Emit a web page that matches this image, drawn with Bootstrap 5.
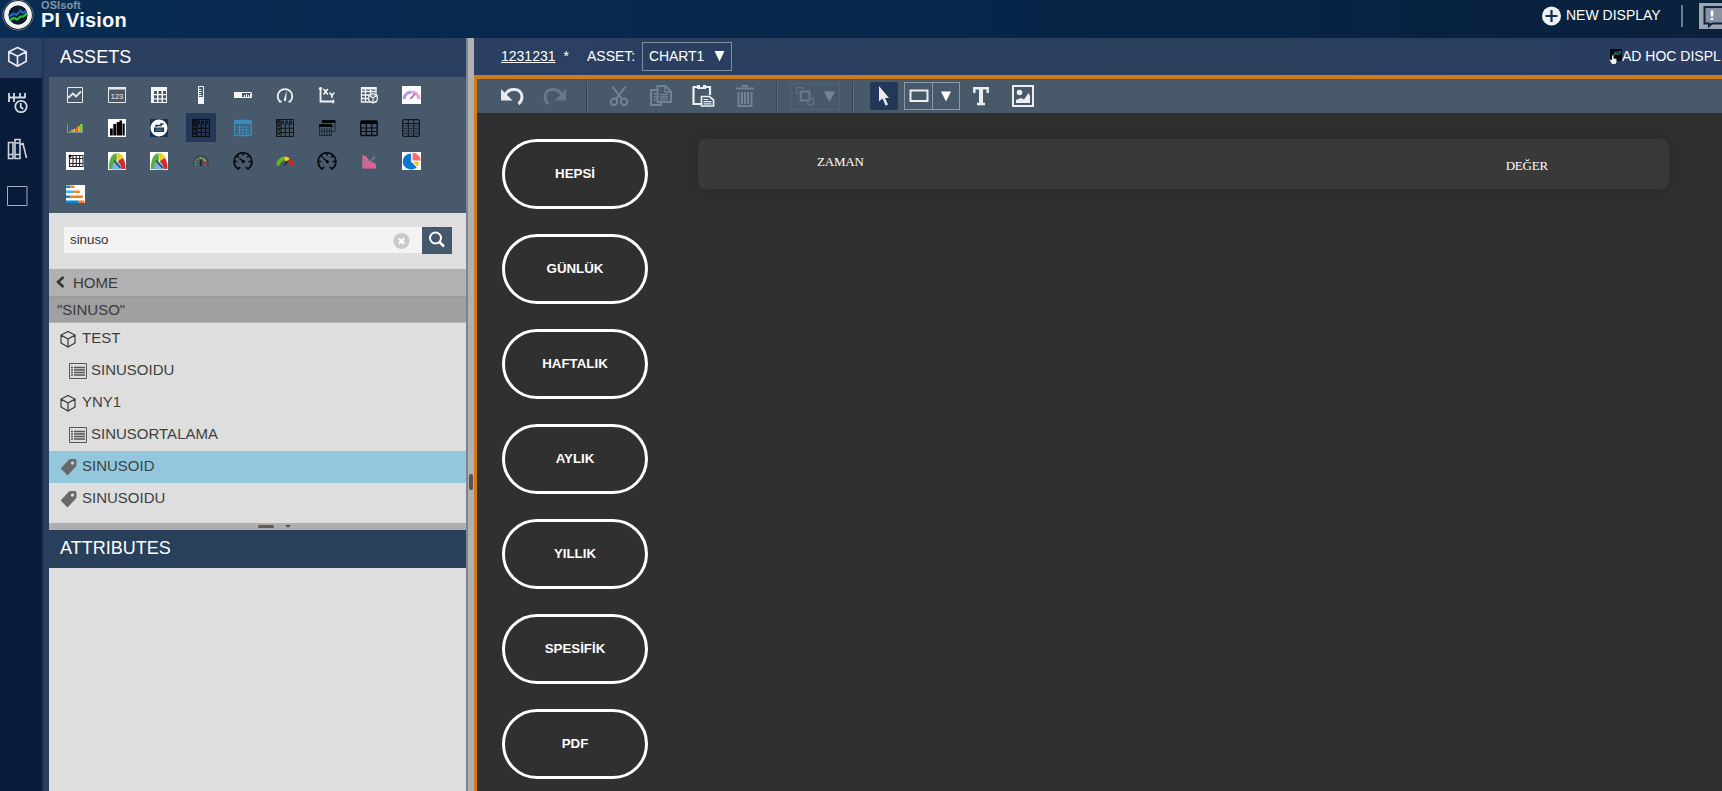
<!DOCTYPE html>
<html lang="tr">
<head>
<meta charset="utf-8">
<meta name="viewport" content="width=device-width, initial-scale=1">
<title>PI Vision</title>
<link rel="stylesheet" href="https://cdn.jsdelivr.net/npm/bootstrap@5.3.0/dist/css/bootstrap.min.css">
<style>
html,body{height:100%}
body{font-family:"Liberation Sans",Arial,sans-serif;font-size:14px;line-height:1;background:#303030;color:#fff;overflow:hidden}
svg{display:block;flex:none}
.topbar{height:38px;flex:none;background:linear-gradient(90deg,#082c52 0,#08284d 35%,#072345 75%,#0a213b 100%)}
.brand{margin-left:1px}
.brand-sub{font-size:11px;font-weight:bold;color:#8795a8;height:10px;line-height:10px;letter-spacing:.1px}
.brand-name{font-size:20px;font-weight:bold;line-height:20px;letter-spacing:.2px;color:#f5f7fa}
.top-actions{width:181px;flex:none;white-space:nowrap;overflow:hidden}
.newdisp{margin:4px 20px 0 4px}
.note{margin:-1px 0 0 16px}
.vline{width:2px;height:22px;margin-top:1px;background:#6b7a8e;flex:none}
.rail{width:42px;flex:none;background:#081b38}
.rail-item{height:47px;padding-left:6px}
.rail-item.active{height:40px;background:#2b4163;padding-bottom:2px}
.panel{width:424px;flex:none;background:#2a3f60;padding-left:5px;border-left:2px solid #20345a}
.panel-title{height:39px;flex:none;font-size:18px;padding:0 0 2px 11px;background:#2a3f5f;letter-spacing:.05px}
.panel-title.attr{height:38px;background:#29405b;letter-spacing:.02px}
.tools{height:136px;flex:none;background:#48596b;display:grid;grid-template-columns:repeat(9,42px);grid-template-rows:repeat(4,33.2px);padding:1px 0 0 5px;justify-items:center;align-items:center}
.tool{width:30px;height:29px;display:flex;align-items:center;justify-content:center}
.tool.active{background:#233858}
.search{height:56px;flex:none;background:#dedede;padding:0 14px 2px 15px}
.field{height:26px;background:#f3f3f3;color:#333;font-size:13.3px;padding:0 12px 0 6px}
.field span{padding-bottom:1px}
.search-btn{width:30px;height:27px;background:#45586b;border:0;border-radius:0;padding:0}
.crumb{height:27px;flex:none;font-size:15px;color:#3a3a3a;background:#b1b1b1;padding:0 0 1px 7px}
.crumb.term{background:#a0a0a0;padding-left:8px;border-top:1px solid #999;border-bottom:1px solid #b8b8b8}
.assets{height:200px;flex:none;background:#dedede}
.entry{height:32px;font-size:15px;color:#3f3f3f;padding-left:11px}
.entry.child{padding-left:20px}
.entry.picked{background:#93c8dc}
.entry span{padding-bottom:3px;margin-left:5px}
.entry .elem{margin-left:6px}
.entry.child span{margin-left:4px}
.hsplit{height:7px;flex:none;background:#aeaeae;padding-left:209px}
.grip{width:16px;height:3px;border-radius:2px;background:#665751}
.caret-sm{border:3px solid transparent;border-top-color:#665751;border-bottom:0;margin-left:11px;margin-top:-1px}
.vsplit{width:8px;flex:none;background:#b0b0b0;border-left:2px solid #7b8596}
.vgrip{width:4px;height:16px;border-radius:2px;background:#5c504b;margin:436px 0 0 1px}
.dispbar{height:37px;flex:none;background:linear-gradient(90deg,#2b3f62,#2a405c 60%,#293c62);padding:0 0 1px 27px}
.dispname{width:86px}
.assetlabel{width:55px}
.assetbox{height:29px;width:90px;border:1px solid #7d8b9e;padding:0 6px 0 6px}
.assetbox span{letter-spacing:-.1px}
.adhoc{width:113px;flex:none;overflow:hidden;white-space:nowrap}
.frame{border-top:4px solid #cf7a1c;border-left:3px solid #cf7a1c;min-height:0}
.toolbar{height:34px;flex:none;background:#48596a;display:grid;padding-left:13px;grid-template-columns:44px 42px 22px 42px 42px 42px 42px 22px 54px 22px 40px 56px 42px 42px;justify-items:center;align-items:center}
.sep{width:2px;height:31px;background:#36475b;border-right:1px solid #586b80}
.grpbox{width:50px;height:27px;border:1px solid #536476}
.cursor{width:28px;height:28px;background:#233858}
.shape{width:56px;height:28px;border:1px solid #8b97a5}
.shape>div{width:28px;height:100%}
.shape>div+div{border-left:1px solid #8b97a5;width:27px}
.canvas{background:#303030;padding:25.500px 0 0 25px;min-height:0;overflow:hidden}
.pills{gap:24.500px;margin-right:50px}
.pill{width:146px;height:70.500px;border:3px solid #fff;border-radius:36px;background:transparent;color:#fff;font-weight:bold;font-size:13.3px;padding:0;flex:none}
.headrow{width:971px;height:50px;border-radius:8px;background:#393939;box-shadow:0 0 16px 4px rgba(38,38,38,.38);font:13px/1 "Liberation Serif",serif;letter-spacing:-.2px;padding:0 121px 0 119px}
</style>
</head>
<body class="d-flex flex-column">
<header class="topbar d-flex">
  <svg width="40" height="38" viewBox="0 0 40 38"><circle cx="18" cy="15" r="15.300" fill="#0a1420" stroke="#597187"/><circle cx="18" cy="15" r="11.700" fill="#14253a" stroke="#f2f2f2" stroke-width="4.400"/><circle cx="18" cy="15" r="9.400" fill="#101c2c"/><path d="M9.500 16.500l4-3 3 1.500 4-4.500 2.500 2.500 3.500-2" fill="none" stroke="#1869c9" stroke-width="2.200"/><path d="M10 20l4-2 3 1.500 3.500-3 3 0 3.500-3" fill="none" stroke="#20c83c" stroke-width="2.200"/></svg>
  <div class="brand"><div class="brand-sub">OSIsoft</div><div class="brand-name">PI Vision</div></div>
  <div class="top-actions ms-auto d-flex align-items-start pt-1">
    <svg width="21" height="22" viewBox="0 0 21 22"><circle cx="10.500" cy="12" r="9.500" fill="#eef0f2"/><path d="M10.500 6v12M4.500 12h12" stroke="#15304f" stroke-width="2.200"/></svg>
    <span class="newdisp">NEW DISPLAY</span>
    <div class="vline"></div>
    <svg class="note" width="24" height="26" viewBox="0 0 24 26"><path fill="#9da5b3" d="M0 0h24v26H0z"/><path d="M5.500 4H24v16.500H13l-3 2.500v-2.500H5.500z" fill="#8793a5" stroke="#10233c" stroke-width="2"/><path d="M13 7.500v6M13 15v2" stroke="#fff" stroke-width="2.500"/></svg>
  </div>
</header>
<main class="d-flex flex-grow-1" style="min-height:0">
  <nav class="rail d-flex flex-column">
    <div class="rail-item active d-flex align-items-center"><svg width="22" height="22" viewBox="0 0 22 22" fill="none" stroke="#e6eaf0" stroke-width="1.700" stroke-linejoin="round"><path d="M11.500 1.500l8.700 4.300v9.500l-8.700 4.900-8.700-4.900V5.800zM2.800 5.800l8.700 4.400 8.700-4.400M11.500 10.200v10"/></svg></div>
    <div class="rail-item d-flex align-items-center"><svg width="24" height="24" viewBox="0 0 24 24" fill="none" stroke="#d4dae2" stroke-width="1.800"><path d="M3 3v9M8 3v9M14 3v5M19 3v5M3 7.500h16"/><circle cx="15" cy="16.500" r="5.700" fill="#081b38"/><path d="M14.700 13v4l2.500 2"/></svg></div>
    <div class="rail-item d-flex align-items-center"><svg width="24" height="24" viewBox="0 0 24 24" fill="none" stroke="#ccd3dc" stroke-width="1.600"><path d="M2.500 5.500h4.500v16H2.500zM9 2.500h5v19H9zM2.500 17.500h4.500M9 6h5M9 17.500h5M14.500 7.500l2.500-1L20.500 21"/></svg></div>
    <div class="rail-item d-flex align-items-center"><svg width="22" height="22" viewBox="0 0 22 22"><path d="M1.500 1.500h19.500v19H1.500z" fill="none" stroke="#a5aeba"/></svg></div>
  </nav>
  <aside class="panel d-flex flex-column">
    <div class="panel-title d-flex align-items-center">ASSETS</div>
    <div class="tools">
      <div class="tool"><svg width="18" height="18" viewBox="0 0 18 18" fill="none" stroke="#e6e9ec"><path d="M1.500 1.500h15v15h-15z"/><path d="M2 12l5-4.500 3 3 5-5" stroke-width="1.800"/></svg></div>
      <div class="tool"><svg width="18" height="18" viewBox="0 0 18 18"><path d="M.5 1.500h17v15H.5z" fill="none" stroke="#e6e9ec"/><path d="M0 1h18v2.500H0z" fill="#e6e9ec"/><text x="9" y="12.800" text-anchor="middle" font-size="7.500" fill="#f2f4f6" font-family="Liberation Sans">123</text></svg></div>
      <div class="tool"><svg width="18" height="18" viewBox="0 0 18 18"><path d="M1 1h16v16H1z" fill="#f2f4f6"/><path d="M4 5h3v3H4zM8.500 5h3v3h-3zM13 5h3v3h-3zM4 9.300h3v3H4zM8.500 9.300h3v3h-3zM13 9.300h3v3h-3zM4 13.500h3v2.500H4zM8.500 13.500h3v2.500h-3zM13 13.500h3v2.500h-3z" fill="#48596b"/></svg></div>
      <div class="tool"><svg width="18" height="18" viewBox="0 0 18 18"><path d="M6.500.5h5v17h-5z" fill="none" stroke="#f2f4f6"/><path d="M6 11h6v7H6zM7 3h2v1H7zM7 5h3v1H7zM7 7h2v1H7zM7 9h3v1H7z" fill="#f2f4f6"/></svg></div>
      <div class="tool"><svg width="18" height="18" viewBox="0 0 18 18"><path d="M.5 6.500h17v5H.5z" fill="none" stroke="#f2f4f6"/><path d="M0 6h8v6H0zM10 9h1v2h-1zM12 8h1v3h-1zM14 9h1v2h-1zM16 8h1v3h-1z" fill="#f2f4f6"/></svg></div>
      <div class="tool"><svg width="18" height="18" viewBox="0 0 18 18" fill="none" stroke="#f2f4f6" stroke-width="1.800"><path d="M5.500 15.500H3.800A7.300 7.300 0 1 1 14.200 15.500H12.500"/><path d="M10.600 4.500L7.800 14a1.200 1.200 0 0 0 2.300.4z" fill="#f2f4f6" stroke="none"/></svg></div>
      <div class="tool"><svg width="18" height="18" viewBox="0 0 18 18" fill="none" stroke="#f2f4f6" stroke-width="1.800"><path d="M2.500 1v14.500H16M.8 2.700h3.400M15.300 13.800v3.400"/><path d="M5.500 3l4.300 5.500M9.800 3L5.500 8.500M11.500 6.500l2.400 3L16.300 6.500M13.900 9v3" stroke-width="1.600"/></svg></div>
      <div class="tool"><svg width="18" height="18" viewBox="0 0 18 18"><path d="M1.500 2h14.500v14H1.500zM1 5.500h15M1 9h15M1 12.500h9M5.500 3v13M10.500 3v13" fill="none" stroke="#f2f4f6" stroke-width="1.300"/><path d="M1 1h15.500v2.500H1z" fill="#f2f4f6"/><path d="M13 7.500l4.200 2v5L13 17l-4.200-2.500v-5zM9 9.500l4 2.200 4-2.200M13 11.500V17" fill="#48596b" stroke="#f2f4f6" stroke-width="1.200"/></svg></div>
      <div class="tool"><svg width="19" height="18" viewBox="0 0 18 18" preserveAspectRatio="none"><path fill="#fff" d="M0 0h18v18H0z"/><path d="M2 13A7 7 0 0 1 9 6" fill="none" stroke="#ad9bea" stroke-width="3"/><path d="M9 6a7 7 0 0 1 7 7" fill="none" stroke="#e7a4e0" stroke-width="3"/><path d="M8 13l4.500-5.500" stroke="#b25ac8" stroke-width="1.600"/></svg></div>

      <div class="tool"><svg width="18" height="18" viewBox="0 0 18 18"><path d="M1.500 5v8.500H17" fill="none" stroke="#8490a0"/><path d="M3 11.500h2V13H3z" fill="#e64c3c"/><path d="M5.200 10.500h2V13h-2z" fill="#80c936"/><path d="M7.400 10h2v3h-2z" fill="#f0c830"/><path d="M9.600 8.500h2V13h-2z" fill="#ef5e45"/><path d="M11.800 7h2v6h-2z" fill="#edb93a"/><path d="M14.200 5h2.400v8h-2.400z" fill="#80d936"/></svg></div>
      <div class="tool"><svg width="18" height="18" viewBox="0 0 18 18"><path fill="#fff" d="M0 0h18v18H0z"/><path d="M2 9.500h2.800v7H2zM5.300 5h2.900v11.500H5.300zM8.700 3h2.800v13.500H8.700zM11.500 1.500h2.500v15h-2.500zM14.500 4.500h2.200v12h-2.200z" fill="#050505"/></svg></div>
      <div class="tool"><svg width="18" height="18" viewBox="0 0 18 18"><path fill="#163452" d="M0 0h18v18H0z"/><circle cx="9" cy="9" r="8.500" fill="#fff"/><path d="M4 8.500h10V13H4z" fill="#163452"/><path d="M6 8V6.500h5V5h2.500" fill="none" stroke="#163452" stroke-width="1.400"/><path d="M5.500 10h7M5.500 11.500h7" stroke="#8493a4" stroke-width=".6"/></svg></div>
      <div class="tool active"><svg width="18" height="18" viewBox="0 0 18 18"><path d="M.5.500h17v17H.5zM1 5h17M1 9.300h17M1 13.500h17M5 1v17M9.300 5v13M13.500 5v13" fill="none" stroke="#090d16" stroke-width="1.200"/><path d="M1 2.700h16M2.800 1v16" stroke="#0c1220" stroke-width="2.400" stroke-dasharray="3 1"/></svg></div>
      <div class="tool"><svg width="18" height="18" viewBox="0 0 18 18"><rect x=".6" y="1.500" width="16.800" height="15" rx="1" fill="#405f78" stroke="#3b8cba" stroke-width="1.300"/><path d="M1 2h16v3H1z" fill="#3b8cba"/><path d="M3 8h12.500M3 11h12.500M3 14h12.500M5.500 6v9M9 6v9M12.500 6v9" stroke="#3b8cba"/></svg></div>
      <div class="tool"><svg width="18" height="18" viewBox="0 0 18 18"><path d="M.5.500h17v17H.5zM1 5h17M1 9.300h17M1 13.500h17M5 1v17M9.300 5v13M13.500 5v13" fill="none" stroke="#10161c" stroke-width="1.100"/><path d="M1 2.700h16M2.800 1v16" stroke="#1b232a" stroke-width="2.400" stroke-dasharray="3 1"/></svg></div>
      <div class="tool"><svg width="18" height="18" viewBox="0 0 18 18"><path d="M4 1h13.500v3H4zM1 5h13v3H1z" fill="#05080b"/><path d="M1.500 8v8.500h12V8M4 9v7M6.500 9v7M9 9v7M11.500 9v7M2 12h11M17 4v8.500H14M14 7h3" fill="none" stroke="#1e2830"/></svg></div>
      <div class="tool"><svg width="18" height="18" viewBox="0 0 18 18"><rect x=".8" y="2" width="16.400" height="14.500" rx="1" fill="none" stroke="#05080b" stroke-width="1.400"/><path d="M1 2h16v3H1z" fill="#05080b"/><path d="M1 9h16M1 12.500h16M6.300 5v11M11.700 5v11" stroke="#05080b" stroke-width="1.200"/></svg></div>
      <div class="tool"><svg width="18" height="18" viewBox="0 0 18 18"><rect x=".7" y=".7" width="16.600" height="16.600" rx="1.500" fill="none" stroke="#10151b" stroke-width="1.300"/><path d="M1 4.500h16M6.300 1v16M11.700 1v16" stroke="#10151b" stroke-width="1.200"/><path d="M2 7h3M2 9.500h3M2 12h3M2 14.500h3M7.500 7h3M7.500 9.500h3M7.500 12h3M7.500 14.500h3M13 7h3M13 9.500h3M13 12h3M13 14.500h3" stroke="#1d262f"/></svg></div>

      <div class="tool"><svg width="18" height="18" viewBox="0 0 18 18"><path fill="#fff" d="M0 0h18v18H0z"/><path d="M3.500 3.500H17v11H3.500zM3.500 6.500H17M3.500 11.500H17M7 3v12M10.300 3v12M13.600 3v12" fill="none" stroke="#282828" stroke-width="1.100"/><circle cx="4" cy="4" r="1.500"/></svg></div>
      <div class="tool"><svg width="18" height="18" viewBox="0 0 18 18"><path fill="#fff" d="M0 0h18v18H0z"/><path d="M.8 17C.8 8 3 2.500 8.500 1l.5 7-4 9z" fill="#5caf3b"/><path d="M8.500 1c4 0 6 2 7 5.500L10 9.500z" fill="#f2cd27"/><path d="M15 6c2 3 2.500 7 2.500 11h-4.500L10 9z" fill="#d9272e"/><path d="M4 17.500c0-5 2-8 4.500-8s5 3 5.500 8z" fill="#79b1dd"/><path d="M6 8.500l6.500 7.500" stroke="#2d3c4d" stroke-width="1.200"/></svg></div>
      <div class="tool"><svg width="18" height="18" viewBox="0 0 18 18"><path fill="#fff" d="M0 0h18v18H0z"/><path d="M.8 17C.8 8 3 2.500 8.500 1l.5 7-4 9z" fill="#5caf3b"/><path d="M8.500 1c4 0 6 2 7 5.500L10 9.500z" fill="#f2cd27"/><path d="M15 6c2 3 2.500 7 2.500 11h-4.500L10 9z" fill="#d9272e"/><path d="M4 17.500c0-5 2-8 4.500-8s5 3 5.500 8z" fill="#79b1dd"/><path d="M6 8.500l6.500 7.500" stroke="#2d3c4d" stroke-width="1.200"/></svg></div>
      <div class="tool"><svg width="18" height="18" viewBox="0 0 18 18" fill="none"><path d="M2.500 14A7 7 0 1 1 15.500 14" stroke="#3b484c" stroke-width="2.200"/><path d="M4 13.500A5 5 0 0 1 8 6" stroke="#41a83a" stroke-width="1.800" stroke-dasharray="2 1"/><path d="M8 6a5.500 5.500 0 0 1 4 1" stroke="#79b83a" stroke-width="1.800" stroke-dasharray="2 1"/><path d="M12 7.300l1.500 2" stroke="#d9a33a" stroke-width="1.800"/><path d="M13.700 10.500l.5 3.500" stroke="#cf3535" stroke-width="2"/><path d="M9 8v6" stroke="#252c31" stroke-width="1.800"/></svg></div>
      <div class="tool"><svg width="20" height="20" viewBox="0 0 18 18" fill="none" stroke="#05080b"><path d="M6.500 14.500l-2 1.700A8 8 0 1 1 13.500 16.200l-2-1.700" stroke-width="1.500"/><path d="M1.500 9.500H4M14 9.500h2.500M9 2v2.300M3.800 4.500l1.500 1.400M14.200 4.500l-1.500 1.400" stroke-width="1.300"/><path d="M5.800 6.500l3 2.700" stroke-width="1.300"/><circle cx="9.300" cy="9.600" r="1.400" fill="#05080b" stroke="none"/></svg></div>
      <div class="tool"><svg width="18" height="18" viewBox="0 0 18 18" fill="none" stroke-width="3.800"><path d="M2 13.500A7 7 0 0 1 8.500 6.500" stroke="#69b51f"/><path d="M8.500 6.500a7 7 0 0 1 4.300 1.400" stroke="#f3cd22"/><path d="M12.800 7.900A7 7 0 0 1 16 13.500" stroke="#c82a1c"/><path d="M8 13.500l4-4.500" stroke="#252c31" stroke-width="1.500"/></svg></div>
      <div class="tool"><svg width="20" height="20" viewBox="0 0 18 18" fill="none" stroke="#05080b"><path d="M6.500 14.500l-2 1.700A8 8 0 1 1 13.500 16.200l-2-1.700" stroke-width="1.500"/><path d="M1.500 9.500H4M14 9.500h2.500M9 2v2.300M3.800 4.500l1.500 1.400M14.200 4.500l-1.500 1.400" stroke-width="1.300"/><path d="M5.800 6.500l3 2.700" stroke-width="1.300"/><circle cx="9.300" cy="9.600" r="1.400" fill="#05080b" stroke="none"/></svg></div>
      <div class="tool"><svg width="18" height="18" viewBox="0 0 18 18"><path d="M2.500 3v13.500H16v-4l-3-2-3-1-4-5z" fill="#e9689d"/><path d="M5 6v10M8 8v8M11 10v6M14 12v4" stroke="#b4487c" stroke-width=".7"/><path d="M2 12l5-3 3 1 5-5.500" fill="none" stroke="#7b8899" stroke-width="1.200"/></svg></div>
      <div class="tool"><svg width="19" height="18" viewBox="0 0 18 18" preserveAspectRatio="none"><path fill="#fff" d="M0 0h18v18H0z"/><path d="M8.500 1.500A8 8 0 1 0 14 15.500L8.500 9.500z" fill="#0878d4"/><path d="M10 .5a8 8 0 0 1 7.500 8H10z" fill="#fa6b68"/><path d="M10.500 10h5.500c0 2-.8 3.500-1.500 4.500z" fill="#fbb936"/></svg></div>

      <div class="tool"><svg width="19" height="18" viewBox="0 0 18 18" preserveAspectRatio="none"><path fill="#fff" d="M0 0h18v18H0z"/><path d="M0 .5h4V3H0zM0 10.500h4V13H0zM0 15.500h12V18H0z" fill="#0788da"/><path d="M0 5.500h8V8H0z" fill="#43b5ec"/><path d="M4 .5h4V3H4zM8 5.500h5V8H8zM4 10.500h12V13H4zM12 15.500h5.500V18H12z" fill="#fb7d17"/></svg></div>
    </div>
    <div class="search d-flex align-items-center">
      <div class="field flex-grow-1 d-flex align-items-center justify-content-between"><span>sinuso</span><svg width="17" height="17" viewBox="0 0 17 17"><circle cx="8.500" cy="9" r="8" fill="#c9c9c9"/><path d="M5.700 6.200l5.600 5.600M11.300 6.200l-5.600 5.600" stroke="#fff" stroke-width="2"/></svg></div>
      <button class="search-btn btn d-flex justify-content-center align-items-center" aria-label="Ara"><svg width="18" height="18" viewBox="0 0 18 18" fill="none" stroke="#fff"><circle cx="7.500" cy="7" r="5.500" stroke-width="2"/><path d="M11.500 11l4.500 4.500" stroke-width="2.500"/></svg></button>
    </div>
    <div class="crumb d-flex align-items-center"><svg width="9" height="12" viewBox="0 0 9 12" class="me-2"><path d="M7.500 1L2 6l5.500 5" fill="none" stroke="#333" stroke-width="2.500"/></svg>HOME</div>
    <div class="crumb term d-flex align-items-center">"SINUSO"</div>
    <div class="assets">
      <div class="entry d-flex align-items-center"><svg width="16" height="18" viewBox="0 0 16 18" fill="none" stroke="#3a3a3a" stroke-width="1.200"><path d="M8 1.500l7 3.500v8l-7 4-7-4V5zM1 5l7 4 7-4M8 9v8"/></svg><span class="elem">TEST</span></div>
      <div class="entry child d-flex align-items-center"><svg width="18" height="16" viewBox="0 0 18 16" fill="none" stroke="#555"><path d="M.5.500h17v15H.5z"/><path d="M2 4.500h2M5 4.500h11M2 7h2M5 7h11M2 9.500h2M5 9.500h11M2 12h2M5 12h11" stroke-width="1.500"/></svg><span>SINUSOIDU</span></div>
      <div class="entry d-flex align-items-center"><svg width="16" height="18" viewBox="0 0 16 18" fill="none" stroke="#3a3a3a" stroke-width="1.200"><path d="M8 1.500l7 3.500v8l-7 4-7-4V5zM1 5l7 4 7-4M8 9v8"/></svg><span class="elem">YNY1</span></div>
      <div class="entry child d-flex align-items-center"><svg width="18" height="16" viewBox="0 0 18 16" fill="none" stroke="#555"><path d="M.5.500h17v15H.5z"/><path d="M2 4.500h2M5 4.500h11M2 7h2M5 7h11M2 9.500h2M5 9.500h11M2 12h2M5 12h11" stroke-width="1.500"/></svg><span>SINUSORTALAMA</span></div>
      <div class="entry picked d-flex align-items-center"><svg width="17" height="18" viewBox="0 0 17 18"><path d="M.7 10.500L8.500 2Q9.500 1 11 1h3.500q2 0 2 2v3.500q0 1.500-1 2.500L7.500 17.500z" fill="#686868"/><circle cx="12.500" cy="5" r="1.700" fill="#b7dbe7"/></svg><span>SINUSOID</span></div>
      <div class="entry d-flex align-items-center"><svg width="17" height="18" viewBox="0 0 17 18"><path d="M.7 10.500L8.500 2Q9.500 1 11 1h3.500q2 0 2 2v3.500q0 1.500-1 2.500L7.500 17.500z" fill="#686868"/><circle cx="12.500" cy="5" r="1.700" fill="#dedede"/></svg><span>SINUSOIDU</span></div>
    </div>
    <div class="hsplit d-flex align-items-center"><div class="grip"></div><div class="caret-sm"></div></div>
    <div class="panel-title attr d-flex align-items-center">ATTRIBUTES</div>
    <div class="flex-grow-1" style="background:#dedede"></div>
  </aside>
  <div class="vsplit"><div class="vgrip"></div></div>
  <section class="d-flex flex-column flex-grow-1" style="min-width:0">
    <div class="dispbar d-flex align-items-center">
      <span class="dispname"><u>1231231</u><span class="ps-2">*</span></span>
      <span class="assetlabel">ASSET:</span>
      <div class="assetbox d-flex align-items-center justify-content-between"><span>CHART1</span><svg width="11" height="12" viewBox="0 0 11 12"><path d="M.5 1h10l-5 10.500z" fill="#fff"/></svg></div>
      <div class="adhoc ms-auto d-flex align-items-center"><svg width="13" height="18" viewBox="0 0 13 18"><path d="M1 2h12v12H1z" fill="#080b0d"/><path d="M4 8.500l3-2 2 1 3-2.500" stroke="#258c3a" stroke-width="1.300" fill="none"/><path d="M5 6l3-1 4-1" stroke="#285c9c" fill="none"/><path d="M3 8.500h1.500v3l3 .5v3L6.500 17H3L.3 12.500l2.700.5z" fill="#f2f2f2"/></svg>AD HOC DISPL</div>
    </div>
    <div class="frame d-flex flex-column flex-grow-1">
      <div class="toolbar">
        <svg width="24" height="22" viewBox="0 0 24 22"><path d="M5 10C9 2 22 2.500 22 12q0 4-3.500 7" fill="none" stroke="#e9ecef" stroke-width="3"/><path d="M1 4v11.500h11.500z" fill="#e9ecef"/></svg>
        <svg width="24" height="22" viewBox="0 0 24 22"><path d="M19 10C15 2 2 2.500 2 12q0 4 3.500 7" fill="none" stroke="#697889" stroke-width="3"/><path d="M23 4v11.500H11.500z" fill="#697889"/></svg>
        <div class="sep"></div>
        <svg width="20" height="22" viewBox="0 0 20 22" fill="none" stroke="#758292" stroke-width="2"><path d="M3.500 1.500L13.500 15M16.500 1.500L6.500 15"/><circle cx="5" cy="16.800" r="3.200"/><circle cx="15" cy="16.800" r="3.200"/></svg>
        <svg width="24" height="24" viewBox="0 0 24 24" fill="none" stroke="#758292" stroke-width="2"><path d="M8 6H2v15h10v-3"/><path d="M8.500 2h8L22 7.500V18H8.500z" fill="#48596a"/><path d="M16 2v6h6M11 10.500h8M11 13h8M11 15.500h8M4.500 10h3M4.500 13h3M4.500 16h3" stroke-width="1.300"/></svg>
        <svg width="24" height="24" viewBox="0 0 24 24" fill="none" stroke="#eceff1" stroke-width="2.200"><path d="M10 20H2.500V3H19v8"/><path d="M6 1h9v4H6z" fill="#eceff1" stroke="none"/><path d="M9 2h3" stroke="#48596a"/><path d="M10.500 12.500h8L22.500 16v6H10.500z" fill="#48596a" stroke-width="1.700"/><path d="M12.500 15.500h5M12.500 17.700h8M12.500 19.900h8" stroke-width="1.200"/></svg>
        <svg width="20" height="24" viewBox="0 0 20 24" fill="none" stroke="#758292" stroke-width="2"><path d="M1 4.500h18M7 2h6M3.500 8v14h13V8M7 8v12M10 8v12M13 8v12"/></svg>
        <div class="sep"></div>
        <div class="grpbox d-flex align-items-center justify-content-around"><svg width="20" height="20" viewBox="0 0 20 20" fill="none" stroke="#6e7a87" stroke-width="1.800"><path d="M5.500 5.500h9v9h-9z"/><path d="M3.500 7.500H1.500v-6h6v2M16 12.500h2.500v6h-6V16" stroke-width="1.300" opacity=".7"/></svg><svg width="11" height="11" viewBox="0 0 11 11"><path d="M0 .5h11L5.500 11z" fill="#78838f"/></svg></div>
        <div class="sep"></div>
        <div class="cursor d-flex align-items-center justify-content-center"><svg width="12" height="20" viewBox="0 0 12 20"><path d="M1 0v15.500l3.500-3 3.200 7.200 2.300-1.200-3-6.500H11z" fill="#e8ebef"/></svg></div>
        <div class="shape d-flex"><div class="d-flex align-items-center justify-content-center"><svg width="20" height="14" viewBox="0 0 20 14"><path d="M1.500 1.500h17v10.500h-17z" fill="none" stroke="#eceef0" stroke-width="2"/></svg></div><div class="d-flex align-items-center justify-content-center"><svg width="10" height="11" viewBox="0 0 10 11"><path d="M0 .5h10L5 10.500z" fill="#fff"/></svg></div></div>
        <svg width="18" height="20" viewBox="0 0 18 20"><path d="M2.300 7V2.300h13.400V7M9 2v16M5 18h8" fill="none" stroke="#eceef0" stroke-width="2.400"/><path d="M7 2h4v16H7z" fill="#eceef0"/></svg>
        <svg width="22" height="22" viewBox="0 0 22 22"><path d="M1 1h20v20H1z" fill="none" stroke="#eceef0" stroke-width="2"/><circle cx="7.500" cy="7.500" r="2.800" fill="#eceef0"/><path d="M4 18v-3l5-2 3 1.500L16.500 8 18 11v7z" fill="#eceef0"/></svg>
      </div>
      <div class="canvas flex-grow-1 d-flex align-items-start">
        <div class="pills d-flex flex-column">
          <button class="pill">HEPSİ</button><button class="pill">GÜNLÜK</button><button class="pill">HAFTALIK</button><button class="pill">AYLIK</button><button class="pill">YILLIK</button><button class="pill">SPESİFİK</button><button class="pill">PDF</button>
        </div>
        <div class="headrow d-flex align-items-center justify-content-between"><span class="pb-1">ZAMAN</span><span class="pt-1">DEĞER</span></div>
      </div>
    </div>
  </section>
</main>
<script src="https://cdn.jsdelivr.net/npm/bootstrap@5.3.0/dist/js/bootstrap.bundle.min.js"></script>
</body>
</html>
